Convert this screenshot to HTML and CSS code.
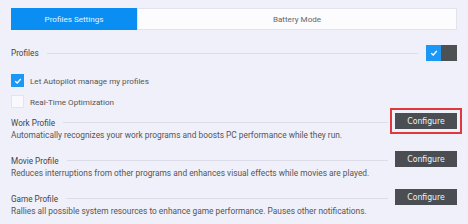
FILE: index.html
```html
<!DOCTYPE html>
<html>
<head>
<meta charset="utf-8">
<link rel="stylesheet" href="styles.css">
</head>
<body>
<div class="page">
  <div class="tabs">
    <div class="tab active">Profiles Settings</div>
    <div class="tab">Battery Mode</div>
  </div>
  <div class="section-head">
    <span class="label">Profiles</span>
    <span class="rule"></span>
    <span class="toggle"><span class="on"><svg width="8" height="8" viewBox="0 0 8 8"><path d="M1.2 4.2 L3.2 6 L6.8 2" fill="none" stroke="#fff" stroke-width="1.3"/></svg></span><span class="off"></span></span>
  </div>
  <div class="checks">
    <label class="check"><span class="box checked"><svg width="10" height="10" viewBox="0 0 10 10"><path d="M2.2 5.2 L4.2 7 L7.8 3" fill="none" stroke="#fff" stroke-width="1.3"/></svg></span>Let Autopilot manage my profiles</label>
    <label class="check"><span class="box"></span>Real-Time Optimization</label>
  </div>
  <div class="profiles">
    <div class="profile">
      <div class="info">
        <div class="ptitle"><span class="label">Work Profile</span><span class="rule"></span></div>
        <div class="desc">Automatically recognizes your work programs and boosts PC performance while they run.</div>
      </div>
      <div class="btn-wrap highlight"><button class="btn">Configure</button></div>
    </div>
    <div class="profile">
      <div class="info">
        <div class="ptitle"><span class="label">Movie Profile</span><span class="rule"></span></div>
        <div class="desc">Reduces interruptions from other programs and enhances visual effects while movies are played.</div>
      </div>
      <div class="btn-wrap"><button class="btn">Configure</button></div>
    </div>
    <div class="profile">
      <div class="info">
        <div class="ptitle"><span class="label">Game Profile</span><span class="rule"></span></div>
        <div class="desc">Rallies all possible system resources to enhance game performance. Pauses other notifications.</div>
      </div>
      <div class="btn-wrap"><button class="btn">Configure</button></div>
    </div>
  </div>
</div>
</body>
</html>
```
FILE: styles.css
```css
html, body {
  margin: 0;
  padding: 0;
  background: #eff0fa;
}
body {
  font-family: Roboto, "Liberation Sans", Arial, sans-serif;
  font-size: 8.2px;
  color: #555;
  width: 468px;
  height: 224px;
  overflow: hidden;
}
.page {
  padding: 8px 11px 0 11px;
}
.tabs {
  display: flex;
  height: 22px;
}
.tab {
  display: flex;
  align-items: center;
  justify-content: center;
  font-size: 8.1px;
  color: #666;
  background: #fcfcff;
  box-shadow: inset 0 0 0 1px #e2e3ec;
  flex: 1;
}
.tab.active {
  flex: 0 0 126px;
  background: #0a8ef2;
  color: #e8f4ff;
  box-shadow: none;
}
.section-head {
  display: flex;
  align-items: center;
  margin-top: 15px;
  height: 16px;
}
.section-head .label {
  font-size: 8.2px;
  color: #444;
}
.rule {
  flex: 1;
  height: 1px;
  background: #dcdde8;
  margin-left: 8px;
}
.section-head .rule {
  margin-right: 8px;
}
.toggle {
  display: flex;
  width: 31px;
  height: 16px;
}
.toggle .on {
  width: 15px;
  background: #1b98f5;
  display: flex;
  align-items: center;
  justify-content: center;
}
.toggle .off {
  flex: 1;
  background: #4c5154;
}
.checks {
  margin-top: 13px;
  display: flex;
  flex-direction: column;
  gap: 8px;
}
.check {
  display: flex;
  align-items: center;
  height: 13px;
  font-size: 8.1px;
  color: #555;
}
.box {
  width: 11px;
  height: 11px;
  border: 1px solid #e3e4ee;
  background: #f9f9fd;
  margin-right: 6px;
  display: flex;
  align-items: center;
  justify-content: center;
}
.box.checked {
  background: #1b98f5;
  border-color: #1b98f5;
}
.profiles {
  margin-top: 8px;
  display: flex;
  flex-direction: column;
  gap: 13px;
}
.profile {
  display: flex;
  align-items: flex-start;
}
.info {
  flex: 1;
  min-width: 0;
}
.ptitle {
  display: flex;
  align-items: center;
  height: 13px;
}
.ptitle .label {
  font-size: 8.2px;
  color: #444;
}
.ptitle .rule {
  margin-right: 0;
}
.desc {
  height: 12px;
  line-height: 12px;
  font-size: 8.35px;
  white-space: nowrap;
  color: #555;
}
.btn-wrap {
  flex: none;
  margin-left: 2px;
  padding: 3px;
  border: 2px solid transparent;
  margin-right: -5px;
  margin-top: -8px;
}
.btn-wrap.highlight {
  border-color: #e0393b;
}
.btn {
  display: block;
  width: 62px;
  height: 16px;
  padding: 0;
  border: none;
  background: #4a4e52;
  color: #f2f2f2;
  font-family: "DejaVu Sans Condensed", "DejaVu Sans", Verdana, sans-serif;
  font-size: 8.6px;
}
```
